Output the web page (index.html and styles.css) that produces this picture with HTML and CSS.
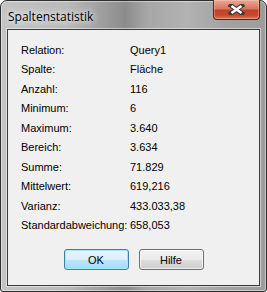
FILE: index.html
```html
<!DOCTYPE html>
<html lang="de">

<head>
  <meta charset="UTF-8">
  <title>Spaltenstatistik</title>
  <link rel="stylesheet" href="styles.css">
</head>

<body>
  <div class="window">
    <!-- Titelleiste -->
    <div class="titlebar">
      <span class="title">Spaltenstatistik</span>
      <div class="close">
        <svg width="17" height="11" viewBox="0 0 17 11">
          <path d="M3 1.5 L14 9.5 M14 1.5 L3 9.5" stroke="#3a3a3a" stroke-width="4.6" stroke-linecap="square" fill="none" />
          <path d="M3.5 2 L13.5 9 M13.5 2 L3.5 9" stroke="#fff" stroke-width="2.6" fill="none" />
        </svg>
      </div>
    </div>
    <!-- Inhalt -->
    <div class="client">
      <div class="stats">
        <span>Relation:</span><span>Query1</span>
        <span>Spalte:</span><span>Fläche</span>
        <span>Anzahl:</span><span>116</span>
        <span>Minimum:</span><span>6</span>
        <span>Maximum:</span><span>3.640</span>
        <span>Bereich:</span><span>3.634</span>
        <span>Summe:</span><span>71.829</span>
        <span>Mittelwert:</span><span>619,216</span>
        <span>Varianz:</span><span>433.033,38</span>
        <span>Standardabweichung:</span><span>658,053</span>
      </div>
      <div class="buttons">
        <button class="btn default">OK</button>
        <button class="btn">Hilfe</button>
      </div>
    </div>
  </div>
</body>

</html>
```

FILE: styles.css
```css
* {
  margin: 0;
  padding: 0;
  box-sizing: border-box;
}

body {
  width: 267px;
  height: 292px;
  background-color: #fff;
}

.window {
  display: flex;
  flex-direction: column;
  width: 267px;
  height: 292px;
  padding: 0 6px 5px 6px;
  border: 1px solid #2e2e2e;
  border-radius: 7px 7px 3px 3px;
  background: linear-gradient(90deg, #c4c4c4 0%, #b9b9b9 25%, #9a9a9a 40%, #8c8c8c 47%, #a6a6a6 55%, #b2b2b2 70%, #a2a2a2 85%, #9c9c9c 100%);
  box-shadow: inset 0 0 0 1px rgba(255, 255, 255, .45);
}

.titlebar {
  display: flex;
  justify-content: space-between;
  height: 28px;
}

.title {
  padding: 9px 0 0 1px;
  font-family: "Open Sans", "Noto Sans", sans-serif;
  font-size: 12px;
  line-height: 14px;
  color: #000;
  text-shadow: 0 0 6px #fff, 0 0 10px #fff;
}

.close {
  display: flex;
  align-items: center;
  justify-content: center;
  width: 47px;
  height: 20px;
  margin-top: -1px;
  border: 1px solid #5b2418;
  border-top: none;
  border-radius: 0 0 4px 4px;
  background: linear-gradient(180deg, #e9a999 0%, #d9775f 45%, #c2412a 55%, #c84a2c 80%, #d8785a 100%);
  box-shadow: inset 0 0 0 1px rgba(255, 220, 200, .35);
}

.client {
  flex: 1;
  border: 1px solid #3a3a3a;
  background-color: #f0f0f0;
  box-shadow: 0 0 0 1px rgba(255, 255, 255, .5);
  font-family: "Liberation Sans", Arial, sans-serif;
  font-size: 11px;
  color: #000;
}

.stats {
  display: grid;
  grid-template-columns: 109px 1fr;
  grid-auto-rows: 19.5px;
  align-items: center;
  padding: 10px 0 0 13px;
  height: 215px;
}

.buttons {
  display: flex;
  justify-content: center;
  gap: 10px;
  padding-top: 4px;
}

.btn {
  width: 65px;
  height: 21px;
  border: 1px solid #707070;
  border-radius: 3px;
  background: linear-gradient(180deg, #f2f2f2 0%, #ebebeb 50%, #dddddd 51%, #cfcfcf 100%);
  box-shadow: inset 0 0 0 1px rgba(255, 255, 255, .7);
  font-family: "Liberation Sans", Arial, sans-serif;
  font-size: 11px;
  color: #000;
}

.default {
  border-color: #3c7fb1;
  background: linear-gradient(180deg, #eaf6fd 0%, #d9f0fc 50%, #bee6fd 51%, #a7d9f5 100%);
  box-shadow: inset 0 0 0 1px #a7e3f9;
}
```
